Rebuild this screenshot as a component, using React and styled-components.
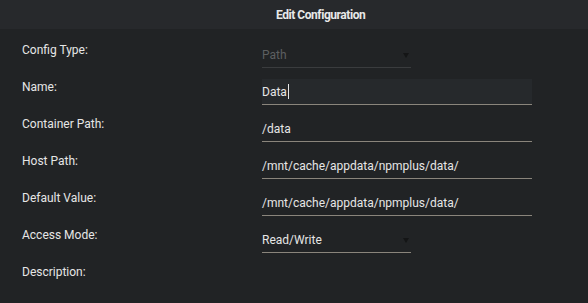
import React from 'react';
import styled, { createGlobalStyle } from 'styled-components';

const GlobalStyles = createGlobalStyle`
  html, body {
    margin: 0;
    padding: 0;
    background: #212325;
  }
  body {
    font-family: Roboto, "Noto Sans", sans-serif;
    color: #e6e6e6;
    -webkit-font-smoothing: antialiased;
  }
`;

const Dialog = styled.div`
  width: 588px;
  height: 303px;
  background: #212325;
  overflow: hidden;
`;

const Header = styled.div`
  height: 29px;
  background: #27292c;
  display: flex;
  align-items: center;
  padding-left: 276px;
  font-size: 12px;
  font-weight: 700;
  letter-spacing: -0.45px;
  color: #e8e8e8;
`;

const Form = styled.div`
  display: flex;
  flex-direction: column;
  padding: 13px 0 0 22px;
`;

const Row = styled.div`
  display: grid;
  grid-template-columns: 240px 1fr;
  align-items: start;
  height: 37px;
`;

const Label = styled.div`
  font-size: 12px;
  line-height: 16px;
  color: #e6e6e6;
`;

const Field = styled.div`
  box-sizing: border-box;
  width: ${p => (p.$narrow ? '149px' : '270px')};
  height: 26px;
  display: flex;
  align-items: center;
  position: relative;
  font-size: 12px;
  color: ${p => (p.$disabled ? '#5d5f61' : '#e6e6e6')};
  background: ${p => (p.$focused ? '#26292c' : 'transparent')};
  border-bottom: 1px solid ${p => (p.$disabled ? '#3a3c3e' : '#8a857c')};
`;

const Caret = styled.span`
  display: inline-block;
  width: 1px;
  height: 15px;
  background: #e6e6e6;
  margin-left: 1px;
`;

const Arrow = styled.span`
  position: absolute;
  right: 2px;
  top: 11px;
  width: 0;
  height: 0;
  border-left: 3px solid transparent;
  border-right: 3px solid transparent;
  border-top: 5px solid #141516;
`;

const rows = [
  { label: 'Config Type:', value: 'Path', narrow: true, disabled: true, select: true },
  { label: 'Name:', value: 'Data', focused: true },
  { label: 'Container Path:', value: '/data' },
  { label: 'Host Path:', value: '/mnt/cache/appdata/npmplus/data/' },
  { label: 'Default Value:', value: '/mnt/cache/appdata/npmplus/data/' },
  { label: 'Access Mode:', value: 'Read/Write', narrow: true, select: true },
  { label: 'Description:' },
];

export default function App() {
  return (
    <>
      <GlobalStyles />
      <Dialog>
        <Header>Edit Configuration</Header>
        <Form>
          {rows.map(r => (
            <Row key={r.label}>
              <Label>{r.label}</Label>
              {r.value !== undefined && (
                <Field $narrow={r.narrow} $disabled={r.disabled} $focused={r.focused}>
                  {r.value}
                  {r.focused && <Caret />}
                  {r.select && <Arrow />}
                </Field>
              )}
            </Row>
          ))}
        </Form>
      </Dialog>
    </>
  );
}
